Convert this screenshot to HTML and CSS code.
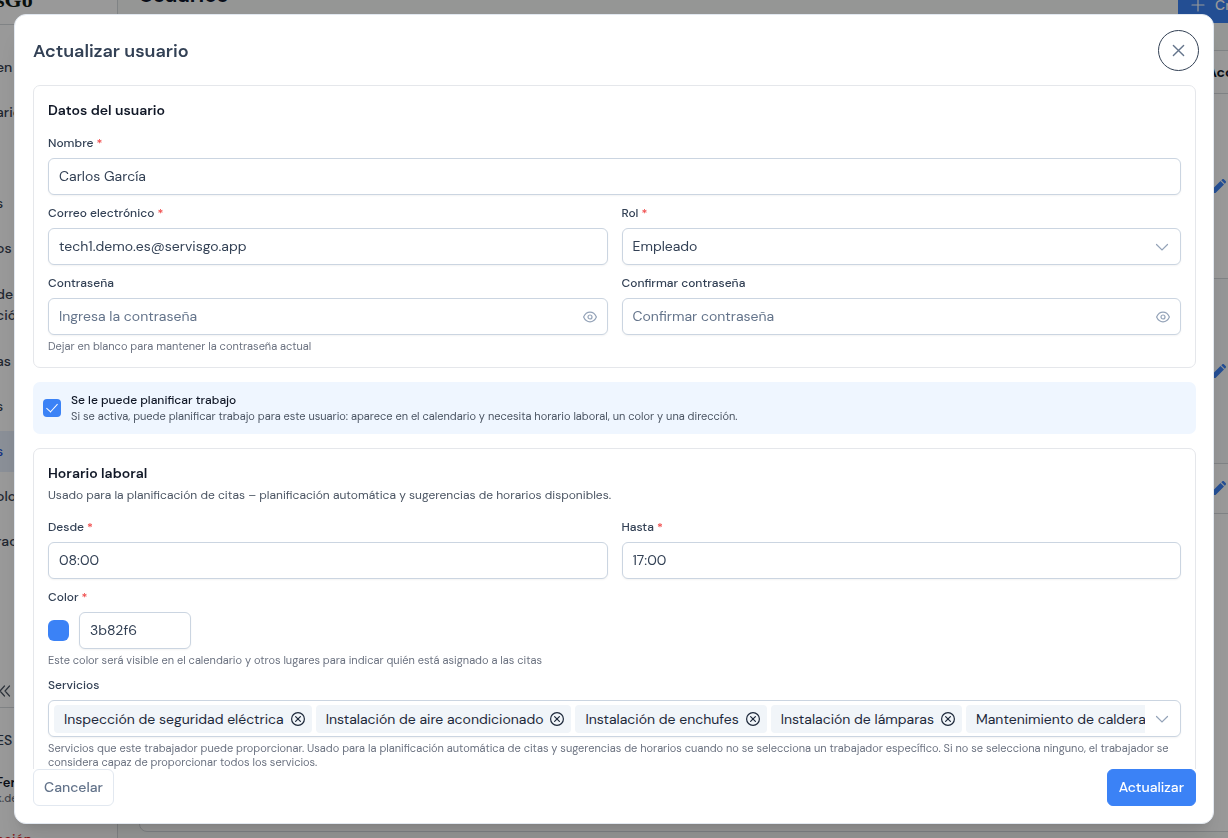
FILE: index.html
```html
<!DOCTYPE html>
<html lang="es">
    <head>
        <meta charset="UTF-8" />
        <meta name="viewport" content="width=device-width, initial-scale=1.0" />
        <title>Actualizar usuario</title>
        <link rel="stylesheet" href="styles.css">
    </head>
    <body>
        <svg class="sprite" aria-hidden="true">
            <symbol id="chevron" viewBox="0 0 14 14">
                <path d="M1.5 4.5 7 10l5.5-5.5" />
            </symbol>
            <symbol id="eye" viewBox="0 0 14 14">
                <path d="M.6 7C2 3.9 4.3 2.2 7 2.2S12 3.9 13.4 7C12 10.100 9.700 11.800 7 11.800S2 10.100.6 7Z" />
                <circle cx="7" cy="7" r="2" />
            </symbol>
            <symbol id="remove" viewBox="0 0 14 14">
                <circle cx="7" cy="7" r="6.400" />
                <path d="m4.600 4.600 4.800 4.800M9.400 4.600 4.600 9.400" />
            </symbol>
            <symbol id="pencil" viewBox="0 0 14 14">
                <path d="M0 14v-3.500L8.500 2 12 5.500 3.500 14ZM9.300 1.200l.8-.8a1.400 1.400 0 0 1 2 0l1.500 1.500a1.400 1.400 0 0 1 0 2l-.8.8Z" />
            </symbol>
        </svg>

        <div class="page">
            <aside class="sidebar">
                <div class="logo">sGo</div>
                <nav class="menu">
                    <a href="#">en</a>
                    <a href="#">ario</a>
                    <a href="#" class="after-group">s</a>
                    <a href="#">os</a>
                    <a href="#" class="two-lines">de<br>ción</a>
                    <a href="#">as e</a>
                    <a href="#">s</a>
                    <a href="#" class="active">s</a>
                    <a href="#">oloq</a>
                    <a href="#">ració</a>
                </nav>
                <button class="collapse" type="button" aria-label="Contraer menú">
                    <svg viewBox="0 0 12 12"><path d="M5.500 1 1 6l4.500 5M10.500 1 6 6l4.500 5" /></svg>
                </button>
                <div class="account">
                    <p class="lang">ES</p>
                    <p class="name">Fern</p>
                    <p class="mail">k.de</p>
                    <a href="#" class="logout">ación</a>
                </div>
            </aside>
            <main class="main">
                <header class="main-header">
                    <h1>Usuarios</h1>
                    <button class="create" type="button">
                        <svg viewBox="0 0 14 14"><path d="M7 1v12M1 7h12" /></svg>
                        Crear
                    </button>
                </header>
                <div class="list">
                    <table>
                        <thead>
                            <tr><th></th><th class="actions">Acciones</th></tr>
                        </thead>
                        <tbody>
                            <tr class="tall"><td></td><td class="actions"><svg><use href="#pencil" /></svg></td></tr>
                            <tr class="tall striped"><td></td><td class="actions"><svg><use href="#pencil" /></svg></td></tr>
                            <tr><td></td><td class="actions"><svg><use href="#pencil" /></svg></td></tr>
                        </tbody>
                    </table>
                </div>
            </main>
        </div>

        <div class="mask">
            <form class="dialog" role="dialog" aria-labelledby="dialog-title">
                <header class="dialog-header">
                    <h2 id="dialog-title">Actualizar usuario</h2>
                    <button class="close" type="button" aria-label="Cerrar">
                        <svg viewBox="0 0 14 14"><path d="m1.500 1.500 11 11M12.500 1.500l-11 11" /></svg>
                    </button>
                </header>

                <div class="dialog-body">
                    <section class="card">
                        <h3>Datos del usuario</h3>
                        <div class="fields">
                            <div class="field wide">
                                <label for="name">Nombre <span class="req">*</span></label>
                                <input id="name" class="control" type="text" value="Carlos García">
                            </div>
                            <div class="field">
                                <label for="email">Correo electrónico <span class="req">*</span></label>
                                <input id="email" class="control" type="text" value="tech1.demo.es@servisgo.app">
                            </div>
                            <div class="field">
                                <label for="role">Rol <span class="req">*</span></label>
                                <div class="with-icon">
                                    <select id="role" class="control">
                                        <option>Empleado</option>
                                    </select>
                                    <svg class="icon"><use href="#chevron" /></svg>
                                </div>
                            </div>
                            <div class="field">
                                <label for="password">Contraseña</label>
                                <div class="with-icon">
                                    <input id="password" class="control" type="password" placeholder="Ingresa la contraseña">
                                    <svg class="icon eye"><use href="#eye" /></svg>
                                </div>
                                <small>Dejar en blanco para mantener la contraseña actual</small>
                            </div>
                            <div class="field">
                                <label for="confirm">Confirmar contraseña</label>
                                <div class="with-icon">
                                    <input id="confirm" class="control" type="password" placeholder="Confirmar contraseña">
                                    <svg class="icon eye"><use href="#eye" /></svg>
                                </div>
                            </div>
                        </div>
                    </section>

                    <div class="schedulable">
                        <input id="schedulable" type="checkbox" checked>
                        <label for="schedulable">
                            <strong>Se le puede planificar trabajo</strong>
                            <span>Si se activa, puede planificar trabajo para este usuario: aparece en el calendario y necesita horario laboral, un color y una dirección.</span>
                        </label>
                    </div>

                    <section class="card">
                        <h3>Horario laboral</h3>
                        <p class="subtitle">Usado para la planificación de citas – planificación automática y sugerencias de horarios disponibles.</p>
                        <div class="fields">
                            <div class="field">
                                <label for="from">Desde <span class="req">*</span></label>
                                <input id="from" class="control" type="text" value="08:00">
                            </div>
                            <div class="field">
                                <label for="to">Hasta <span class="req">*</span></label>
                                <input id="to" class="control" type="text" value="17:00">
                            </div>
                            <div class="field wide">
                                <label for="color">Color <span class="req">*</span></label>
                                <div class="color-row">
                                    <input class="swatch" type="color" value="#3b82f6" aria-label="Elegir color">
                                    <input id="color" class="control hex" type="text" value="3b82f6">
                                </div>
                                <small>Este color será visible en el calendario y otros lugares para indicar quién está asignado a las citas</small>
                            </div>
                            <div class="field wide">
                                <span class="label" id="services-label">Servicios</span>
                                <div class="control multiselect" role="group" aria-labelledby="services-label">
                                    <div class="chips">
                                        <span class="chip">Inspección de seguridad eléctrica <button type="button" aria-label="Quitar"><svg><use href="#remove" /></svg></button></span>
                                        <span class="chip">Instalación de aire acondicionado <button type="button" aria-label="Quitar"><svg><use href="#remove" /></svg></button></span>
                                        <span class="chip">Instalación de enchufes <button type="button" aria-label="Quitar"><svg><use href="#remove" /></svg></button></span>
                                        <span class="chip">Instalación de lámparas <button type="button" aria-label="Quitar"><svg><use href="#remove" /></svg></button></span>
                                        <span class="chip">Mantenimiento de calderas <button type="button" aria-label="Quitar"><svg><use href="#remove" /></svg></button></span>
                                    </div>
                                    <svg class="arrow"><use href="#chevron" /></svg>
                                </div>
                                <small>Servicios que este trabajador puede proporcionar. Usado para la planificación automática de citas y sugerencias de horarios cuando no se selecciona un trabajador específico. Si no se selecciona ninguno, el trabajador se considera capaz de proporcionar todos los servicios.</small>
                            </div>
                        </div>
                    </section>
                </div>

                <footer class="dialog-footer">
                    <button class="btn" type="button">Cancelar</button>
                    <button class="btn primary" type="submit">Actualizar</button>
                </footer>
            </form>
        </div>
    </body>
</html>
```

FILE: styles.css
```css
* {
    box-sizing: border-box;
    margin: 0;
    padding: 0;
}
body {
    font-family: "DM Sans", Inter, "Liberation Sans", sans-serif;
    font-size: 14px;
    line-height: 20px;
    color: #334155;
    overflow: hidden;
}
button,
input,
select {
    font: inherit;
    color: inherit;
}
button {
    border: none;
    background: none;
    cursor: pointer;
}
a {
    color: inherit;
    text-decoration: none;
}
svg {
    display: block;
    flex: none;
    width: 14px;
    height: 14px;
    fill: none;
    stroke: currentColor;
    stroke-width: 1.2;
    stroke-linecap: round;
}
.sprite {
    display: none;
}

/* page behind the dialog */
.page {
    display: flex;
    height: 100vh;
    margin-left: -4px;
    overflow: hidden;
    background: #f9fbf9;
}
.sidebar {
    display: flex;
    flex-direction: column;
    flex: none;
    width: 122px;
    border-right: 1px solid #d6dade;
    background: #fff;
    font-weight: 500;
}
.logo {
    height: 25px;
    border-bottom: 1px solid #d6dade;
    font-family: "Liberation Serif", serif;
    font-size: 22px;
    font-weight: 700;
    line-height: 0;
    color: #0f1a14;
}
.menu {
    display: flex;
    flex-direction: column;
    gap: 4px;
    flex: 1;
    padding-top: 22px;
}
.menu a {
    padding: 10px 0;
    line-height: 21px;
    color: #374151;
}
.menu .after-group {
    margin-top: 46px;
}
.menu .two-lines {
    padding: 11px 0;
}
.menu .active {
    background: #e6eefc;
    color: #1d4ed8;
}
.collapse {
    padding: 10px 0 10px 3px;
    color: #4b5563;
}
.collapse svg {
    width: 12px;
    height: 12px;
}
.account {
    height: 131px;
    border-top: 1px solid #d6dade;
    padding-top: 22px;
}
.lang {
    line-height: 21px;
    margin-bottom: 24px;
}
.name {
    line-height: 16px;
    font-size: 13px;
    font-weight: 600;
    color: #111827;
}
.mail {
    font-size: 11px;
    line-height: 14px;
    color: #6b7280;
}
.logout {
    display: block;
    padding-top: 24px;
    line-height: 20px;
    color: #dc2626;
}
.main {
    display: flex;
    flex-direction: column;
    flex: 1;
    margin-right: -64px;
    padding: 0 0 6px 21px;
}
.main-header {
    display: flex;
    justify-content: space-between;
    align-items: flex-start;
    margin: -14px 0 27px;
}
.main-header h1 {
    font-size: 21px;
    line-height: 18px;
    color: #0f172a;
}
.create {
    display: flex;
    align-items: center;
    gap: 10px;
    width: 114px;
    height: 37px;
    padding-left: 13px;
    background: #3b82f6;
    color: #fff;
    font-weight: 500;
}
.list {
    flex: 1;
    border: 1px solid #d6dade;
    border-radius: 8px;
    background: #fff;
}
table {
    width: 100%;
    border-collapse: collapse;
}
tr {
    height: 50px;
    border-bottom: 1px solid #d6dade;
}
thead tr {
    height: 42px;
}
.tall {
    height: 185px;
}
.striped {
    background: #f9fafb;
}
.actions {
    width: 84px;
    text-align: left;
    color: #0f172a;
}
td.actions {
    padding-left: 5px;
}
td.actions svg {
    fill: #3b82f6;
    stroke: none;
}

/* dialog */
.mask {
    position: fixed;
    inset: 0;
    display: flex;
    padding: 14px;
    background: rgba(0, 0, 0, 0.4);
}
.dialog {
    display: flex;
    flex-direction: column;
    flex: 1;
    min-width: 0;
    border: 1px solid #e2e8f0;
    border-radius: 12px;
    background: #fff;
    box-shadow: 0 20px 25px -5px rgba(0, 0, 0, 0.1), 0 8px 10px -6px rgba(0, 0, 0, 0.1);
}
.dialog-header {
    display: flex;
    justify-content: space-between;
    align-items: center;
    padding: 15px 14px 14px 18px;
}
.dialog-header h2 {
    font-size: 18px;
    font-weight: 600;
}
.close {
    display: flex;
    align-items: center;
    justify-content: center;
    width: 41px;
    height: 41px;
    border: 1px solid #334155;
    border-radius: 50%;
    color: #64748b;
}
.close svg {
    width: 13px;
    height: 13px;
    stroke-width: 1.5;
}
.dialog-body {
    display: flex;
    flex-direction: column;
    gap: 14px;
    flex: 1;
    min-height: 0;
    padding: 0 17px 0 18px;
    overflow-y: auto;
    scrollbar-width: none;
}
.card {
    flex: none;
    padding: 14px;
    border: 1px solid #e5e7eb;
    border-radius: 7px;
}
.card h3 {
    font-size: 14px;
    font-weight: 600;
    line-height: 20px;
    color: #111827;
}
.subtitle {
    margin-top: 3px;
    font-size: 12px;
    line-height: 18px;
    color: #4b5563;
}
.fields {
    display: grid;
    grid-template-columns: 1fr 1fr;
    gap: 9px 14px;
    margin-top: 14px;
}
.field {
    min-width: 0;
}
.wide {
    grid-column: 1 / -1;
}
.field label,
.label {
    display: block;
    margin-bottom: 6px;
    font-size: 12px;
    font-weight: 500;
    line-height: 18px;
}
.req {
    color: #ef4444;
}
.control {
    display: block;
    width: 100%;
    height: 37px;
    padding: 0 10px 1px;
    border: 1px solid #cbd5e1;
    border-radius: 6px;
    background: #fff;
    box-shadow: 0 1px 2px rgba(18, 18, 23, 0.05);
    outline: none;
    appearance: none;
}
.control::placeholder {
    color: #64748b;
}
.with-icon {
    position: relative;
}
.icon {
    position: absolute;
    top: 12px;
    right: 12px;
    color: #94a3b8;
}
.eye {
    right: 11px;
}
small {
    display: block;
    margin-top: 4px;
    font-size: 11px;
    line-height: 14px;
    color: #6b7280;
}
.schedulable {
    display: flex;
    align-items: center;
    gap: 10px;
    flex: none;
    padding: 10px;
    border-radius: 7px;
    background: #eff6ff;
}
.schedulable input {
    flex: none;
    width: 18px;
    height: 18px;
    border-radius: 4px;
    background: #3b82f6;
    appearance: none;
}
.schedulable input:checked::before {
    content: "";
    display: block;
    width: 5px;
    height: 10px;
    margin: 2px 0 0 6px;
    border: solid #fff;
    border-width: 0 1px 1px 0;
    transform: rotate(42deg);
}
.schedulable strong,
.schedulable span {
    display: block;
    line-height: 16px;
}
.schedulable strong {
    font-size: 12px;
    font-weight: 500;
    color: #111827;
}
.schedulable span {
    font-size: 11px;
    color: #4b5563;
}
.color-row {
    display: flex;
    align-items: center;
    gap: 10px;
}
.swatch {
    width: 21px;
    height: 21px;
    border: none;
    border-radius: 6px;
    background: none;
    overflow: hidden;
    appearance: none;
}
.swatch::-webkit-color-swatch-wrapper {
    padding: 0;
}
.swatch::-webkit-color-swatch {
    border: none;
}
.hex {
    width: 112px;
}
.multiselect {
    display: flex;
    align-items: center;
    padding: 0 11px 0 5px;
}
.chips {
    display: flex;
    gap: 4px;
    flex: 1;
    min-width: 0;
    margin-right: 10px;
    overflow: hidden;
}
.chip {
    display: flex;
    align-items: center;
    gap: 7px;
    flex: none;
    height: 28px;
    padding: 0 7px 0 10px;
    border-radius: 4px;
    background: #f1f5f9;
    color: #1e293b;
}
.arrow {
    color: #94a3b8;
}
.dialog-footer {
    display: flex;
    justify-content: space-between;
    padding: 0 17px 17px 18px;
}
.btn {
    height: 37px;
    padding: 0 10px 1px;
    border: 1px solid #e2e8f0;
    border-radius: 6px;
    color: #64748b;
    font-weight: 500;
}
.primary {
    padding: 0 11px 1px;
    border-color: #3b82f6;
    background: #3b82f6;
    color: #fff;
}
```
